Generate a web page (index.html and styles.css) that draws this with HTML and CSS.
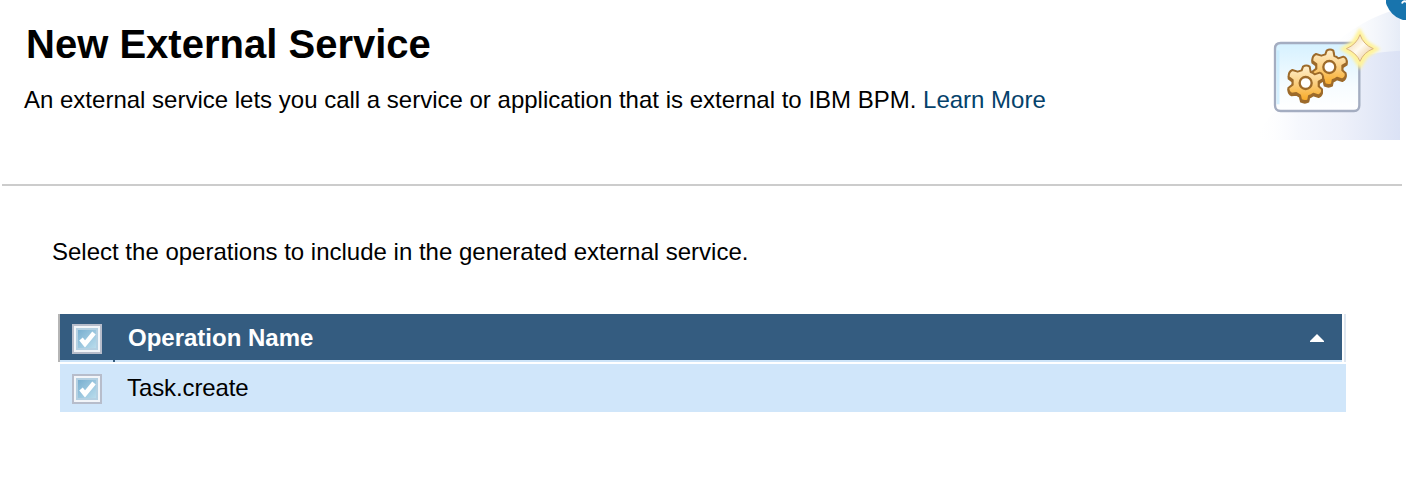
FILE: index.html
```html
<!DOCTYPE html>
<html lang="en">
<head>
<meta charset="utf-8">
<title>New External Service</title>
<link rel="stylesheet" href="styles.css">
</head>
<body>
<header class="banner">
  <div class="intro">
    <h1 class="title">New External Service</h1>
    <p class="summary">An external service lets you call a service or application that is external to IBM BPM. <a class="link" href="#">Learn More</a></p>
  </div>
  <svg class="art" viewBox="0 0 480 420" aria-hidden="true">
    <defs>
      <linearGradient id="sky"><stop offset="0" stop-color="#fff" stop-opacity="0"/><stop offset=".3" stop-color="#f6f8fd"/><stop offset=".6" stop-color="#eef1fa"/><stop offset="1" stop-color="#dbe2f5"/></linearGradient>
      <linearGradient id="outer"><stop offset="0" stop-color="#fff" stop-opacity="0"/><stop offset="1" stop-color="#e6ecf7"/></linearGradient>
      <linearGradient id="card" x2="0" y2="1"><stop offset="0" stop-color="#d5f1ff"/><stop offset=".65" stop-color="#f7fcff"/><stop offset="1" stop-color="#fff"/></linearGradient>
      <linearGradient id="gold" gradientUnits="userSpaceOnUse" x1="0" y1="-50" x2="0" y2="52"><stop offset="0" stop-color="#ffefcd"/><stop offset=".5" stop-color="#fbcf80"/><stop offset="1" stop-color="#f8aa26"/></linearGradient>
      <linearGradient id="spark" x2="1" y2="1"><stop offset="0" stop-color="#f0cf96"/><stop offset=".5" stop-color="#fffaf0"/><stop offset="1" stop-color="#e6bd7d"/></linearGradient>
      <filter id="soft"><feGaussianBlur stdDeviation="1.7"/></filter>
      <filter id="glow" x="-50%" y="-50%" width="200%" height="200%"><feGaussianBlur stdDeviation="5"/></filter>
      <path id="cog" d="M-8-49Q2-56 12-49L15-33Q22-31 27-26L42-31Q54-27 52-12L39-4V10L49 19Q51 32 39 37L23 32Q17 37 10 39L8 51Q-2 57-14 51L-17 37-28 30-42 32Q-52 27-52 15L-39 5V-9L-51-18Q-52-34-40-39L-24-34-12-38Z"/>
    </defs>
    <path fill="url(#outer)" d="M240 155Q340 55 462 26V420H240Z"/>
    <path fill="url(#sky)" d="M25 420Q170 165 462 152V420Z"/>
    <g filter="url(#soft)">
      <path d="M104 129H325Q340 129 340 145V316Q340 333 324 333H104Q87 333 87 316V146Q87 129 104 129Z" fill="url(#card)" stroke="#a4adc1" stroke-width="7"/>
      <path d="M96 151V313" stroke="#c2eaff" stroke-width="9" opacity=".65"/>
      <g stroke="#9d6b2a" stroke-width="6" stroke-linejoin="round">
        <g transform="translate(250 201)"><use href="#cog" y="5" fill="#9d6b2a"/><use href="#cog" fill="url(#gold)"/><circle r="18" fill="#fff" stroke-width="7"/></g>
        <g transform="translate(179 249)"><use href="#cog" y="5" fill="#9d6b2a"/><use href="#cog" fill="url(#gold)"/><circle r="18" fill="#fff" stroke-width="7"/></g>
      </g>
    </g>
    <path d="M341 91L362 126 396 147 362 169 342 202 320 168 288 147 322 124Z" fill="#fff39b" stroke="#fff39b" stroke-width="8" filter="url(#glow)"/>
    <path d="M342 104Q352 134 382 146 353 157 342 184 331 158 301 146 332 133 342 104Z" fill="url(#spark)" stroke="#d9b47c" stroke-width="3" filter="url(#soft)"/>
  </svg>
  <svg class="help" viewBox="0 0 20 20" aria-hidden="true"><circle cx="24" cy="-4" r="25" fill="#1874ad"/><path d="M16 3.5Q17 0 21 2" fill="none" stroke="#fff" stroke-width="2"/></svg>
</header>
<main class="content">
  <p class="prompt">Select the operations to include in the generated external service.</p>
  <div class="table">
    <div class="head">
      <div class="head-main">
        <span class="box"><svg class="check" viewBox="2 2 18 18"><path d="M5 11L9 16 18 5"/></svg></span>
        <span class="heading">Operation Name</span>
        <svg class="sort" viewBox="0 0 16 10"><path d="M8 1L15 8V9H1V8Z"/></svg>
        <span class="notch"></span>
      </div>
    </div>
    <div class="row">
      <span class="box"><svg class="check" viewBox="2 2 18 18"><path d="M5 11L9 16 18 5"/></svg></span>
      <span class="name">Task.create</span>
    </div>
  </div>
</main>
</body>
</html>
```
FILE: styles.css
```css
* { box-sizing: border-box; }
body {
  margin: 0;
  height: 480px;
  overflow: hidden;
  background: #fff;
  color: #000;
  font: 24px/28px "Liberation Sans", Arial, sans-serif;
}
.banner {
  position: relative;
  display: flex;
  justify-content: space-between;
  height: 186px;
  margin: 0 4px 0 2px;
  padding-left: 22px;
  border-bottom: 2px solid #ccc;
}
.title {
  margin: 21px 0 0 2px;
  font-size: 40px;
  line-height: 46px;
  letter-spacing: .01px;
}
.summary { margin: 19px 0 0; white-space: nowrap; }
.link { color: #05426b; text-decoration: none; }
.art {
  flex: none;
  width: 160px;
  height: 140px;
  margin-right: -4px;
}
.help {
  position: absolute;
  top: 0;
  right: -4px;
  width: 20px;
  height: 20px;
}
.content { padding: 52px 60px 0 58px; }
.prompt { margin: 0 0 48px -6px; }
.table { width: 1288px; }
.head {
  display: flex;
  height: 48px;
  border-left: 2px solid #b5b5b5;
  border-right: 2px solid #dfe7f0;
}
.head-main {
  position: relative;
  display: flex;
  width: 1282px;
  padding: 10px 17px 0 12px;
  background: #345c80;
  border-bottom: 2px solid #cde4f8;
}
/* Column divider foot over the header's lower edge */
.notch {
  position: absolute;
  left: 53px;
  bottom: -2px;
  width: 2px;
  height: 2px;
  background: #345c80;
}
.box {
  flex: none;
  width: 30px;
  height: 30px;
  padding: 2px;
  border: 2px solid #b7bdcb;
  background: #f2f5f9;
}
.check {
  display: block;
  width: 22px;
  height: 22px;
  border: 2px solid #b4d0e2;
  background: linear-gradient(135deg, #79afd0, #b9dcec);
  overflow: visible;
}
.check path { fill: none; stroke: #fff; stroke-width: 4.5; }
.heading {
  flex: 1;
  margin-left: 26px;
  color: #fff;
  font-weight: bold;
}
.sort { width: 16px; height: 10px; margin-top: 9px; fill: #fff; }
.row {
  display: flex;
  height: 48px;
  margin: 2px 0 0 2px;
  padding: 10px 12px;
  background: #d0e6fa;
}
.name { margin-left: 25px; letter-spacing: -.1px; }
```
